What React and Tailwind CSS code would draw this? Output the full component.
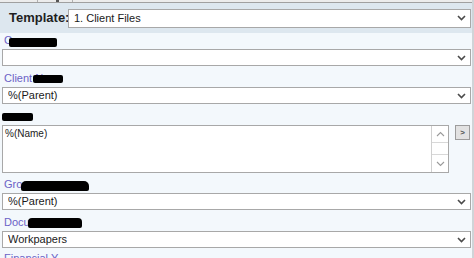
import React from 'react';

const Chevron = () => (
  <svg width="9" height="6" viewBox="0 0 9 6" className="shrink-0">
    <path d="M1 1 L4.5 4.5 L8 1" fill="none" stroke="#4a4a4a" strokeWidth="1.6" />
  </svg>
);

const Select = ({ value, className = 'h-[17px]' }) => (
  <div className={`bg-white border border-[#a8a8a8] flex items-center justify-between pl-[5px] pr-[4px] shrink-0 ${className}`}>
    <span className="text-[11px] text-[#1a1a1a] leading-none truncate">{value}</span>
    <Chevron />
  </div>
);

// black marker over the hidden part of a label
const Redact = ({ w, h = 9, className = '' }) => (
  <span className={`inline-block bg-black rounded-[2px] ${className}`} style={{ width: w, height: h }} />
);

const Label = ({ children, h = 21 }) => (
  <div className="flex items-end pb-[2px] pl-[2px] text-[11px] leading-[13px] text-[#6b62c6] shrink-0" style={{ height: h }}>
    {children}
  </div>
);

const App = () => {
  return (
    <div className="w-[474px] h-[258px] overflow-hidden flex bg-[#f3f8fc]" style={{ fontFamily: '"Liberation Sans", Arial, sans-serif' }}>
      <div className="flex-1 flex flex-col min-w-0">
        {/* tab strip remnant */}
        <div className="h-[3px] bg-[#ececec] border-b border-[#a0a0a0] flex shrink-0">
          <div className="w-[38px] border-r border-[#b0b0b0]" />
          <div className="w-[35px] border-r border-[#b0b0b0] relative">
            <span className="absolute left-[18px] top-0 w-[3px] h-[2px] bg-[#555]" />
          </div>
        </div>

        {/* template header */}
        <div className="h-[30px] bg-[#dde7ef] flex items-center pl-[9px] pr-[1px] shrink-0">
          <span className="text-[13px] font-bold text-[#1f1f1f] w-[59px]">Template:</span>
          <Select value="1. Client Files" className="flex-1 h-[19px]" />
        </div>

        <div className="flex flex-col pl-[2px] pr-[1px]">
          <Label h={16}>
            <span>C</span>
            <Redact w={48} className="-ml-[3px]" />
          </Label>
          <Select value="" />

          <Label>
            <span>Client N</span>
            <Redact w={30} h={8} className="-ml-[10px] mb-[2px]" />
          </Label>
          <Select value="%(Parent)" />

          <Label h={21}>
            <Redact w={31} h={8} className="mb-[2px] -ml-[2px]" />
          </Label>
          <div className="flex items-start gap-[6px] shrink-0">
            <div className="flex-1 h-[48px] bg-white border border-[#a8a8a8] flex">
              <div className="flex-1 pl-[2px] pt-[2px] text-[10px] leading-[11px] text-[#222]">%(Name)</div>
              <div className="w-[17px] border-l border-[#d0d0d0] flex flex-col">
                <div className="h-[17px] border-b border-[#d8d8d8] flex items-center justify-center">
                  <svg width="9" height="6" viewBox="0 0 9 6"><path d="M1 5 L4.5 1.5 L8 5" fill="none" stroke="#9a9a9a" strokeWidth="1.1" /></svg>
                </div>
                <div className="flex-1" />
                <div className="h-[18px] border-t border-[#d8d8d8] flex items-center justify-center">
                  <svg width="9" height="6" viewBox="0 0 9 6"><path d="M1 1 L4.5 4.5 L8 1" fill="none" stroke="#9a9a9a" strokeWidth="1.1" /></svg>
                </div>
              </div>
            </div>
            <div className="w-[15px] h-[15px] bg-[#e2e2e2] border border-[#9c9c9c] flex items-center justify-center mr-[1px]">
              <span className="text-[8px] leading-none font-bold text-[#555]">&gt;</span>
            </div>
          </div>

          <Label h={20}>
            <span>Gro</span>
            <Redact w={68} h={10} className="-ml-[1px] rounded-t-[5px]" />
          </Label>
          <Select value="%(Parent)" />

          <Label h={21}>
            <span>Docu</span>
            <Redact w={54} h={10} className="-ml-[2px] mb-[1px] rounded-t-[4px]" />
          </Label>
          <Select value="Workpapers" />

          <div className="h-[12px] flex items-end pl-[2px] text-[11px] leading-[11px] text-[#6b62c6] overflow-hidden">
            <span className="translate-y-[4px]">Financial Y</span>
          </div>
        </div>
      </div>
      <div className="w-[2px] bg-[#d0d4d8] shrink-0" />
    </div>
  );
};

export default App;
